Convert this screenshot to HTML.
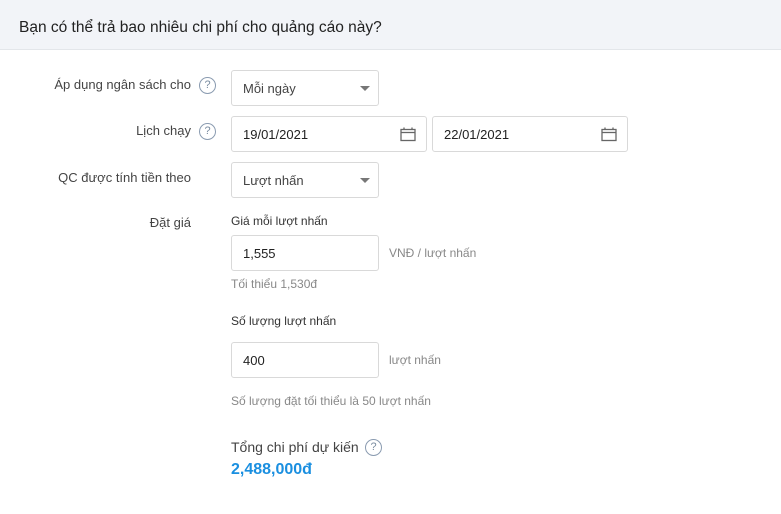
<!DOCTYPE html>
<html><head><meta charset="utf-8"><style>
body{margin:0;width:781px;height:514px;background:#fff;font-family:"Liberation Sans",sans-serif;position:relative;overflow:hidden;color:#333}
.hdr{position:absolute;left:0;top:0;width:781px;height:49px;background:#f2f4f8;border-bottom:1px solid #e3e6ea}
.hdr span{position:absolute;left:19px;top:19px;font-size:15.5px;color:#222}
.a{position:absolute;font-size:13px;white-space:nowrap}
.lbl{color:#444;text-align:right;right:590px}
.box{position:absolute;border:1px solid #d9d9d9;border-radius:3px;background:#fff;box-sizing:border-box;font-size:13px;color:#444}
.box span{position:absolute;left:11px;top:10px}
.q{position:absolute;width:15px;height:15px;border:1px solid #8a9bb0;border-radius:50%;font-size:11px;color:#7a8ca0;text-align:center;line-height:15px}
.caret{position:absolute;right:8px;top:15px;width:0;height:0;border-left:5px solid transparent;border-right:5px solid transparent;border-top:5px solid #777}
.cal{position:absolute;right:10px;top:10px}
.g{color:#888;font-size:12px}
</style></head><body>
<div class="hdr"><span>Bạn có thể trả bao nhiêu chi phí cho quảng cáo này?</span></div>

<div class="a lbl" style="top:77px">Áp dụng ngân sách cho</div>
<div class="q" style="left:199px;top:77px">?</div>
<div class="box" style="left:231px;top:70px;width:148px;height:36px"><span>Mỗi ngày</span><div class="caret"></div></div>

<div class="a lbl" style="top:123px">Lịch chạy</div>
<div class="q" style="left:199px;top:123px">?</div>
<div class="box" style="left:231px;top:116px;width:196px;height:36px"><span style="color:#222">19/01/2021</span>
<svg class="cal" width="16" height="15" viewBox="0 0 16 15"><rect x="1" y="2.5" width="14" height="11" fill="none" stroke="#666" stroke-width="1.3"/><line x1="1" y1="5.5" x2="15" y2="5.5" stroke="#666" stroke-width="1.3"/><line x1="4" y1="0.5" x2="4" y2="3" stroke="#666" stroke-width="1.3"/><line x1="12" y1="0.5" x2="12" y2="3" stroke="#666" stroke-width="1.3"/></svg></div>
<div class="box" style="left:432px;top:116px;width:196px;height:36px"><span style="color:#222">22/01/2021</span>
<svg class="cal" width="16" height="15" viewBox="0 0 16 15"><rect x="1" y="2.5" width="14" height="11" fill="none" stroke="#666" stroke-width="1.3"/><line x1="1" y1="5.5" x2="15" y2="5.5" stroke="#666" stroke-width="1.3"/><line x1="4" y1="0.5" x2="4" y2="3" stroke="#666" stroke-width="1.3"/><line x1="12" y1="0.5" x2="12" y2="3" stroke="#666" stroke-width="1.3"/></svg></div>

<div class="a lbl" style="top:170px">QC được tính tiền theo</div>
<div class="box" style="left:231px;top:162px;width:148px;height:36px"><span>Lượt nhấn</span><div class="caret"></div></div>

<div class="a lbl" style="top:215px">Đặt giá</div>
<div class="a" style="left:231px;top:214px;font-size:12px;color:#333">Giá mỗi lượt nhấn</div>
<div class="box" style="left:231px;top:235px;width:148px;height:36px"><span style="color:#222">1,555</span></div>
<div class="a g" style="left:389px;top:246px">VNĐ / lượt nhấn</div>
<div class="a g" style="left:231px;top:277px">Tối thiểu 1,530đ</div>

<div class="a" style="left:231px;top:314px;font-size:12px;color:#333">Số lượng lượt nhấn</div>
<div class="box" style="left:231px;top:342px;width:148px;height:36px"><span style="color:#222">400</span></div>
<div class="a g" style="left:389px;top:353px">lượt nhấn</div>
<div class="a g" style="left:231px;top:394px">Số lượng đặt tối thiểu là 50 lượt nhấn</div>

<div class="a" style="left:231px;top:439px;font-size:14px;color:#444">Tổng chi phí dự kiến</div>
<div class="q" style="left:365px;top:439px">?</div>
<div class="a" style="left:231px;top:461px;font-size:16px;font-weight:bold;color:#1a8fe0">2,488,000đ</div>
</body></html>
